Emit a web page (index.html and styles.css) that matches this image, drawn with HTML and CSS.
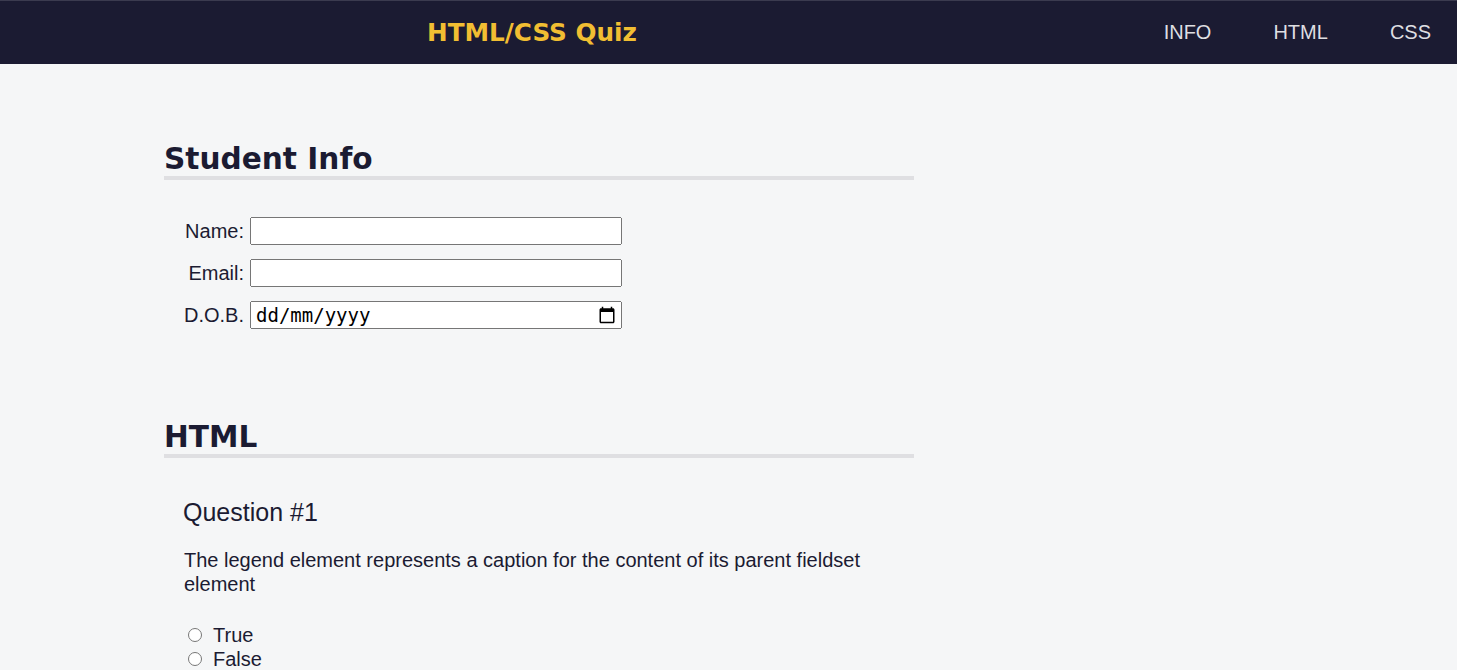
FILE: index.html
```html
<!DOCTYPE html>
<html lang="en-GB">
<head>
<meta charset="utf-8">
<title>HTML/CSS Quiz</title>
<link rel="stylesheet" href="styles.css">
</head>
<body>
<header class="site-header">
  <h1 class="site-title">HTML/CSS Quiz</h1>
  <nav class="site-nav">
    <ul class="nav-list">
      <li class="nav-item"><a href="#student-info">INFO</a></li>
      <li class="nav-item"><a href="#html-questions">HTML</a></li>
      <li class="nav-item"><a href="#css-questions">CSS</a></li>
    </ul>
  </nav>
</header>
<main class="main">
  <form class="quiz">
    <section class="quiz-section" id="student-info">
      <h2 class="section-title">Student Info</h2>
      <div class="info">
        <div class="info-row">
          <label class="info-label" for="student-name">Name:</label>
          <input class="info-input" type="text" id="student-name">
        </div>
        <div class="info-row">
          <label class="info-label" for="student-email">Email:</label>
          <input class="info-input" type="email" id="student-email">
        </div>
        <div class="info-row">
          <label class="info-label" for="birth-date">D.O.B.</label>
          <span class="date-field">
            <input class="info-input date-input" type="text" id="birth-date" placeholder="dd/mm/yyyy">
            <svg class="date-icon" viewBox="0 0 24 24" width="18" height="18" aria-hidden="true"><path fill="#000" d="M20 3h-1V1h-2v2H7V1H5v2H4c-1.1 0-2 .9-2 2v16c0 1.1.9 2 2 2h16c1.1 0 2-.9 2-2V5c0-1.1-.9-2-2-2zm0 18H4V8h16v13z"/></svg>
          </span>
        </div>
      </div>
    </section>
    <section class="quiz-section" id="html-questions">
      <h2 class="section-title">HTML</h2>
      <div class="question-block">
        <h3 class="question-number">Question #1</h3>
        <p class="question-text">The legend element represents a caption for the content of its parent fieldset element</p>
        <ul class="answers">
          <li class="answer"><input class="answer-radio" type="radio" name="q1" id="q1-a1" value="true"><label for="q1-a1">True</label></li>
          <li class="answer"><input class="answer-radio" type="radio" name="q1" id="q1-a2" value="false"><label for="q1-a2">False</label></li>
        </ul>
      </div>
    </section>
  </form>
</main>
</body>
</html>
```
FILE: styles.css
```css
* {
  box-sizing: border-box;
}

body {
  margin: 0;
  background: #f5f6f7;
  color: #1b1b32;
  font-family: "Liberation Sans", Arial, sans-serif;
  font-size: 20px;
}

.site-header {
  height: 64px;
  background: #1b1b32;
  border-top: 1px solid #3b3b4f;
  display: flex;
  align-items: center;
  justify-content: space-between;
  padding: 0 26px 0 427px;
}

.site-title {
  margin: 0;
  color: #f1be32;
  font-family: "DejaVu Sans", Verdana, sans-serif;
  font-weight: bold;
  font-size: 24.7px;
}

.nav-list {
  list-style: none;
  margin: 0;
  padding: 0;
  display: flex;
  gap: 62px;
}

.nav-item a {
  color: #dfdfe2;
  text-decoration: none;
  font-size: 20px;
}

.main {
  padding-top: 18px;
}

.quiz-section {
  width: 750px;
  margin-left: 164px;
}

.section-title {
  margin: 0;
  padding-top: 60px;
  font-family: "DejaVu Sans", Verdana, sans-serif;
  font-weight: bold;
  font-size: 29.6px;
  line-height: 34px;
  border-bottom: 4px solid #dfdfe2;
}

.info {
  padding: 37px 0 31px 5px;
  display: flex;
  flex-direction: column;
  gap: 14px;
}

.info-row {
  display: flex;
  align-items: center;
}

.info-label {
  width: 75px;
  text-align: right;
  margin-right: 6px;
}

.info-input {
  width: 372px;
  height: 28px;
  margin: 0;
  font-family: "DejaVu Sans Mono", monospace;
  font-size: 19px;
}

.date-field {
  position: relative;
  display: flex;
}

.date-input {
  padding-left: 4px;
}

.date-input::placeholder {
  color: #000;
  opacity: 1;
}

.date-icon {
  position: absolute;
  right: 6px;
  top: 5px;
}

.question-block {
  padding: 40px 20px 0 19px;
}

.question-number {
  margin: 0;
  font-weight: normal;
  font-size: 25px;
  line-height: 28px;
}

.question-text {
  margin: 22px 0 0 1px;
  font-size: 20px;
  line-height: 24px;
}

.answers {
  list-style: none;
  margin: 27px 0 0;
  padding: 0;
}

.answer {
  display: flex;
  align-items: center;
  height: 24px;
}

.answer-radio {
  width: 14px;
  height: 14px;
  margin: 0 11px 0 5px;
}
```
